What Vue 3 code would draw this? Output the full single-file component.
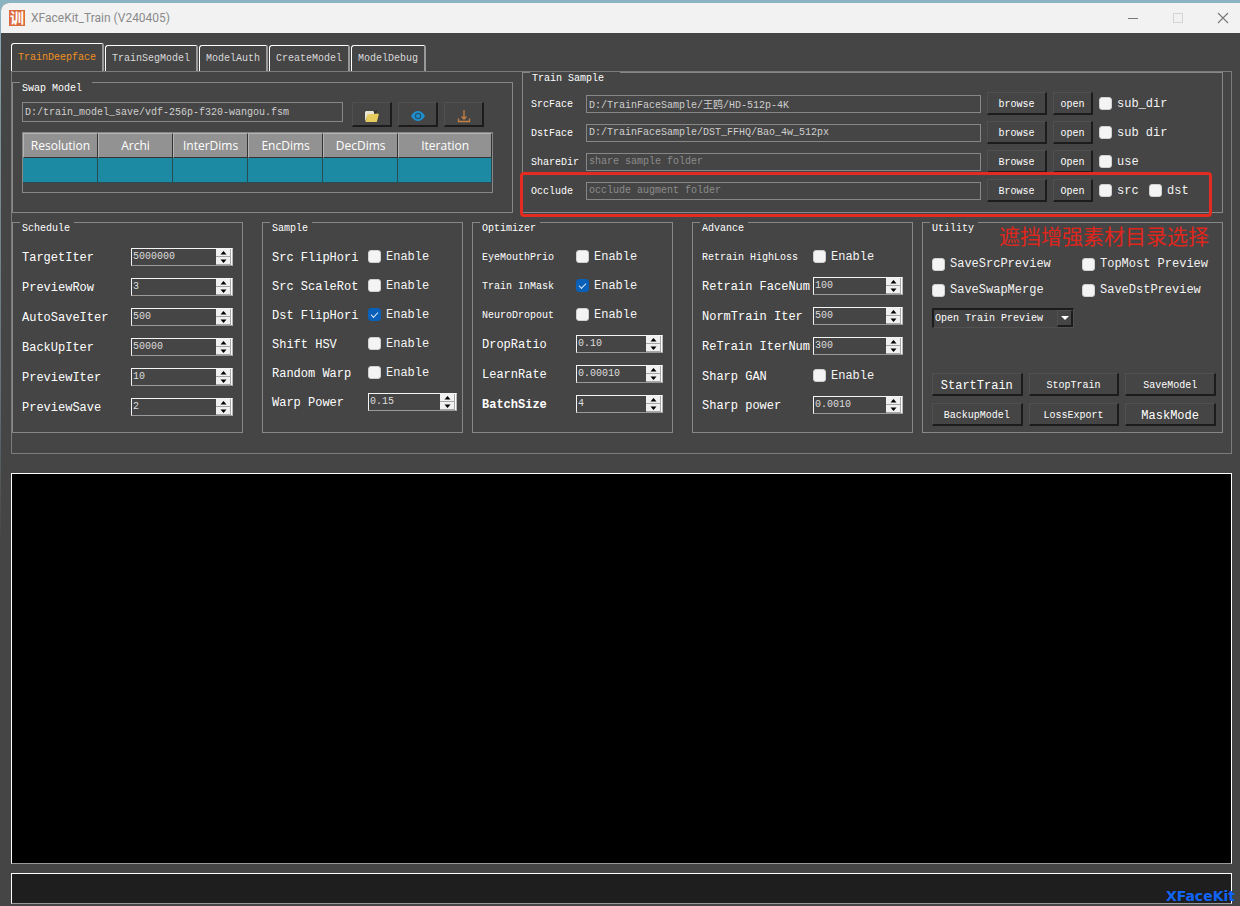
<script setup>
import { ref, reactive } from 'vue'

const tabs = ['TrainDeepface', 'TrainSegModel', 'ModelAuth', 'CreateModel', 'ModelDebug']
const activeTab = ref('TrainDeepface')
const modelPath = ref('D:/train_model_save/vdf-256p-f320-wangou.fsm')
const columns = ['Resolution', 'Archi', 'InterDims', 'EncDims', 'DecDims', 'Iteration']

const folders = reactive([
  { id: 'src', label: 'SrcFace', value: 'D:/TrainFaceSample/王鸥/HD-512p-4K', hint: '', browse: 'browse', open: 'open', checks: ['sub_dir'] },
  { id: 'dst', label: 'DstFace', value: 'D:/TrainFaceSample/DST_FFHQ/Bao_4w_512px', hint: '', browse: 'browse', open: 'open', checks: ['sub dir'] },
  { id: 'share', label: 'ShareDir', value: '', hint: 'share sample folder', browse: 'Browse', open: 'Open', checks: ['use'] },
  { id: 'occlude', label: 'Occlude', value: '', hint: 'occlude augment folder', browse: 'Browse', open: 'Open', checks: ['src', 'dst'], note: '遮挡增强素材目录选择' },
])

const groups = reactive([
  {
    name: 'Schedule',
    rows: [
      { label: 'TargetIter', value: '5000000' },
      { label: 'PreviewRow', value: '3' },
      { label: 'AutoSaveIter', value: '500' },
      { label: 'BackUpIter', value: '50000' },
      { label: 'PreviewIter', value: '10' },
      { label: 'PreviewSave', value: '2' },
    ],
  },
  {
    name: 'Sample',
    rows: [
      { label: 'Src FlipHori', check: true, on: false },
      { label: 'Src ScaleRot', check: true, on: false },
      { label: 'Dst FlipHori', check: true, on: true },
      { label: 'Shift HSV', check: true, on: false },
      { label: 'Random Warp', check: true, on: false },
      { label: 'Warp Power', value: '0.15' },
    ],
  },
  {
    name: 'Optimizer',
    rows: [
      { label: 'EyeMouthPrio', check: true, on: false, small: true },
      { label: 'Train InMask', check: true, on: true, small: true },
      { label: 'NeuroDropout', check: true, on: false, small: true },
      { label: 'DropRatio', value: '0.10' },
      { label: 'LearnRate', value: '0.00010' },
      { label: 'BatchSize', value: '4', strong: true },
    ],
  },
  {
    name: 'Advance',
    rows: [
      { label: 'Retrain HighLoss', check: true, on: false, small: true },
      { label: 'Retrain FaceNum', value: '100' },
      { label: 'NormTrain Iter', value: '500' },
      { label: 'ReTrain IterNum', value: '300' },
      { label: 'Sharp GAN', check: true, on: false },
      { label: 'Sharp power', value: '0.0010' },
    ],
  },
])

const utilityChecks = ['SaveSrcPreview', 'TopMost Preview', 'SaveSwapMerge', 'SaveDstPreview']
const actions = [
  { name: 'StartTrain', large: true },
  { name: 'StopTrain' },
  { name: 'SaveModel' },
  { name: 'BackupModel' },
  { name: 'LossExport' },
  { name: 'MaskMode', large: true },
]

function step(row, dir) {
  const digits = (row.value.split('.')[1] || '').length
  row.value = Math.max(0, Number(row.value) + dir * 10 ** -digits).toFixed(digits)
}
</script>

<template>
  <div class="desktop">
    <div class="window">
      <header class="titlebar">
        <span class="logo">训</span>
        <h1>XFaceKit_Train (V240405)</h1>
        <div class="window-buttons">
          <button type="button" aria-label="Minimize">
            <svg width="12" height="12" viewBox="0 0 12 12"><path d="M1 6.5h10" stroke="#777" /></svg>
          </button>
          <button type="button" aria-label="Maximize" disabled>
            <svg width="12" height="12" viewBox="0 0 12 12"><rect x="1.5" y="1.5" width="9" height="9" fill="none" stroke="#d4d4d4" /></svg>
          </button>
          <button type="button" aria-label="Close">
            <svg width="12" height="12" viewBox="0 0 12 12"><path d="M1 1l10 10M11 1L1 11" stroke="#777" stroke-width="1.1" /></svg>
          </button>
        </div>
      </header>

      <main class="content">
        <nav class="tabs" role="tablist">
          <button
            v-for="tab in tabs"
            :key="tab"
            type="button"
            role="tab"
            :aria-selected="tab === activeTab"
            :class="{ active: tab === activeTab }"
            @click="activeTab = tab"
          >{{ tab }}</button>
        </nav>

        <div class="panel">
          <div class="top-row">
            <section class="group swap">
              <h2>Swap Model</h2>
              <div class="model-row">
                <input v-model="modelPath" class="field" type="text" aria-label="Model path" />
                <button type="button" class="btn" aria-label="Open model">
                  <svg width="16" height="14" viewBox="0 0 16 14">
                    <path d="M1 12.500V3l1-1h7l1 1h3v3H4z" fill="#e9e4d4" />
                    <path d="M10 2l3-1v4h-3z" fill="#333" />
                    <path d="M3.500 5.500L14 4.500l.8 1-2 7.500H1.500z" fill="#e8cd5e" />
                  </svg>
                </button>
                <button type="button" class="btn" aria-label="Preview model">
                  <svg width="16" height="14" viewBox="0 0 16 14">
                    <path d="M1 7Q4 2 8 2t7 5q-3 5-7 5T1 7z" fill="#1e90d2" />
                    <circle cx="8" cy="7" r="2.600" fill="#1e90d2" stroke="#24536f" stroke-width="1.300" />
                  </svg>
                </button>
                <button type="button" class="btn" aria-label="Export model">
                  <svg width="14" height="14" viewBox="0 0 14 14" fill="none" stroke="#c68045" stroke-width="1.300">
                    <path d="M1.500 9.500v3h11v-3M7 1v8.500M4.500 7.500L7 10l2.500-2.500" />
                  </svg>
                </button>
              </div>
              <div class="table-frame">
                <table>
                  <thead>
                    <tr><th v-for="c in columns" :key="c" scope="col">{{ c }}</th></tr>
                  </thead>
                  <tbody>
                    <tr><td v-for="c in columns" :key="c"></td></tr>
                  </tbody>
                </table>
              </div>
            </section>

            <section class="group train">
              <h2>Train Sample</h2>
              <div v-for="f in folders" :key="f.id" class="folder-row">
                <label :for="'dir-' + f.id">{{ f.label }}</label>
                <input :id="'dir-' + f.id" v-model="f.value" class="field" type="text" :placeholder="f.hint" />
                <button type="button" class="btn browse">{{ f.browse }}</button>
                <button type="button" class="btn open">{{ f.open }}</button>
                <div class="folder-checks">
                  <label v-for="c in f.checks" :key="c" class="check">
                    <input type="checkbox" />{{ c }}
                  </label>
                </div>
                <div v-if="f.note" class="callout"><span>{{ f.note }}</span></div>
              </div>
            </section>
          </div>

          <div class="group-row">
            <section v-for="g in groups" :key="g.name" class="group options" :class="g.name.toLowerCase()">
              <h2>{{ g.name }}</h2>
              <div v-for="r in g.rows" :key="r.label" class="option" :class="{ tick: r.check }">
                <label class="name" :class="{ small: r.small, strong: r.strong }" :for="g.name + r.label">{{ r.label }}</label>
                <label v-if="r.check" class="check">
                  <input :id="g.name + r.label" v-model="r.on" type="checkbox" />Enable
                </label>
                <div v-else class="spinner">
                  <input :id="g.name + r.label" v-model="r.value" type="text" inputmode="decimal" />
                  <div class="steps">
                    <button type="button" aria-label="Increase" @click="step(r, 1)">
                      <svg width="7" height="4" viewBox="0 0 7 4"><path d="M3.500 0L6.500 3.500h-6z" /></svg>
                    </button>
                    <button type="button" aria-label="Decrease" @click="step(r, -1)">
                      <svg width="7" height="4" viewBox="0 0 7 4"><path d="M3.500 4L6.500 .5h-6z" /></svg>
                    </button>
                  </div>
                </div>
              </div>
            </section>

            <section class="group utility">
              <h2>Utility</h2>
              <div class="utility-checks">
                <label v-for="c in utilityChecks" :key="c" class="check">
                  <input type="checkbox" />{{ c }}
                </label>
              </div>
              <div class="combo">
                <select aria-label="Preview mode">
                  <option>Open Train Preview</option>
                </select>
                <span class="combo-arrow">
                  <svg width="8" height="4" viewBox="0 0 8 4"><path d="M0 0h8L4 4z" fill="#fff" /></svg>
                </span>
              </div>
              <div class="actions">
                <button v-for="a in actions" :key="a.name" type="button" class="btn" :class="{ large: a.large }">{{ a.name }}</button>
              </div>
            </section>
          </div>
        </div>

        <div class="output"></div>
        <footer class="status"><strong>XFaceKit</strong></footer>
      </main>
    </div>
  </div>
</template>

<style>
body {
  margin: 0;
  background: #454545;
}
</style>

<style scoped>
* {
  box-sizing: border-box;
}

.desktop {
  --bg: #454545;
  --line: #878787;
  display: flex;
  min-height: 100vh;
  padding: 3px 0 0 1px;
  background: linear-gradient(#8bb4c2 0, #7f949c 12%, #66747c 42%, #454545 60%);
  font-family: "Liberation Mono", "Noto Sans CJK SC", monospace;
  font-size: 10px;
  line-height: 14px;
  color: #fff;
}

.window {
  flex: 1;
  display: flex;
  flex-direction: column;
  min-width: 0;
  border-radius: 8px 0 0 0;
  background: var(--bg);
  overflow: hidden;
}

button,
input,
select {
  margin: 0;
  font: inherit;
  color: inherit;
  border-radius: 0;
}

.titlebar {
  display: flex;
  align-items: center;
  height: 30px;
  padding-left: 8px;
  background: #f2f2f2;
}

.logo {
  width: 16px;
  height: 16px;
  background: #dc6a3c;
  font: bold 14px/14px "Noto Sans CJK SC", sans-serif;
  text-align: center;
}

h1 {
  margin: 0 0 0 6px;
  font: 12px/16px Roboto, "Noto Sans", sans-serif;
  color: #8a8a8a;
}

.window-buttons {
  display: flex;
  margin-left: auto;
}

.window-buttons button {
  display: grid;
  place-items: center;
  width: 45px;
  height: 30px;
  padding: 0;
  border: 0;
  background: none;
}

.window-buttons button:last-child {
  width: 40px;
  padding-left: 5px;
}

.content {
  flex: 1;
  display: flex;
  flex-direction: column;
  padding: 10px 8px 2px 10px;
}

.tabs {
  display: flex;
  align-items: flex-end;
  gap: 1px;
}

.tabs button {
  height: 26px;
  padding: 0 6px;
  border: solid;
  border-color: #fff #999 transparent #fff;
  border-width: 1px 2px 0 1px;
  border-radius: 3px 2px 0 0;
  background: var(--bg);
  color: #d8d8d8;
}

.tabs button.active {
  height: 28px;
  color: #f0911e;
}

.panel {
  padding: 0 8px 20px 0;
  border: 1px solid #7c7c7c;
}

.top-row {
  display: grid;
  grid-template-columns: 501fr 701fr;
  gap: 9px;
}

.group-row {
  display: grid;
  grid-template-columns: 241fr 201fr 211fr 221fr 301fr;
  gap: 9px;
  margin-top: 9px;
}

.group {
  display: flex;
  flex-direction: column;
  min-width: 0;
  padding: 0 9px 10px;
  border: 1px solid var(--line);
}

h2 {
  align-self: flex-start;
  margin: -1px 0 6px -2px;
  padding: 0 4px 0 2px;
  background: var(--bg);
  font-size: 10px;
  font-weight: normal;
  line-height: 14px;
}

.field {
  min-width: 0;
  padding: 0 2px;
  border: 1px solid var(--line);
  background: transparent;
  color: #cfcfcf;
}

.field::placeholder {
  color: #8c8c8c;
  opacity: 1;
}

.btn {
  display: grid;
  place-items: center;
  height: 23px;
  padding: 3px 0 0;
  border: solid;
  border-width: 1px 2px 2px 1px;
  border-color: #505050 #1c1c1c #1c1c1c #505050;
  background: var(--bg);
}

.swap {
  margin-top: 10px;
  padding-right: 19px;
}

.swap h2 {
  padding-right: 10px;
}

.model-row {
  display: flex;
  align-items: flex-start;
  gap: 6px;
  margin: 0 9px 5px 0;
}

.model-row .field {
  flex: 1;
  height: 20px;
  margin-right: 3px;
}

.model-row .btn {
  width: 40px;
  height: 25px;
}

.table-frame {
  height: 61px;
  border: 1px solid var(--line);
}

table {
  width: 100%;
  border-collapse: separate;
  border-spacing: 0;
  table-layout: fixed;
  font: 12px/22px "Open Sans", "Noto Sans", sans-serif;
}

th {
  height: 25px;
  padding: 0;
  border: 1px solid;
  border-color: #b4b4b4 #333 #333 #b4b4b4;
  background: #929292;
  font-weight: normal;
}

th:last-child {
  width: 20%;
}

td {
  height: 25px;
  padding: 0;
  border: solid #2b4b52;
  border-width: 0 1px 1px 0;
  background: #1b8aa2;
}

.train {
  padding: 0 10px 10px 8px;
}

.train h2 {
  margin-left: -1px;
  padding-right: 16px;
}

.folder-row {
  position: relative;
  display: flex;
  align-items: center;
  gap: 6px;
}

.folder-row + .folder-row {
  margin-top: 6px;
}

.folder-row > label {
  width: 49px;
  padding-top: 2px;
}

.folder-row .field {
  flex: 1;
  height: 18px;
}

.browse {
  width: 60px;
}

.open {
  width: 40px;
}

.folder-checks {
  display: flex;
  width: 113px;
}

.folder-checks .check {
  width: 50px;
}

.folder-checks .check:only-child {
  width: auto;
}

.check {
  display: flex;
  align-items: center;
  gap: 5px;
  font-size: 12px;
  color: #f4f4f4;
  white-space: nowrap;
}

.check input {
  flex: none;
  appearance: none;
  display: grid;
  place-items: center;
  width: 13px;
  height: 13px;
  border: 1px solid #d0d0d0;
  border-radius: 3px;
  background: #f4f4f4;
}

.check input:checked {
  border-color: #0a5fb8;
  background: #0a5fb8;
}

.check input:checked::before {
  content: "";
  width: 6px;
  height: 3px;
  margin-bottom: 2px;
  border: solid #d6e6f6;
  border-width: 0 0 1px 1px;
  transform: rotate(-45deg);
}

.callout {
  position: absolute;
  inset: -7px 0 -15px -11px;
  border: 3px solid #e32b22;
  border-radius: 4px;
  pointer-events: none;
}

.callout span {
  position: absolute;
  top: 100%;
  right: 0;
  margin-top: 6px;
  font: 21px/30px "Noto Sans CJK SC", sans-serif;
  color: #e0261c;
  white-space: nowrap;
}

.schedule,
.optimizer {
  margin-right: 10px;
}

.sample {
  padding-right: 5px;
}

.option {
  display: flex;
  align-items: center;
  height: 30px;
}

.option.tick {
  height: 29px;
}

.name {
  flex: none;
  padding-top: 2px;
  font-size: 12px;
  white-space: nowrap;
}

.name.small {
  font-size: 10px;
}

.name.strong {
  font-weight: bold;
}

.schedule .name {
  width: 109px;
}

.sample .name {
  width: 96px;
}

.optimizer .name {
  width: 94px;
}

.advance .name {
  width: 111px;
}

.spinner {
  flex: 1;
  display: flex;
  min-width: 0;
  height: 18px;
  border: solid;
  border-width: 1px;
  border-color: #f4f4f4 #b8b8b8 #9a9a9a #f4f4f4;
}

.spinner input {
  flex: 1;
  width: 0;
  min-width: 0;
  padding: 0 1px;
  border: 0;
  background: transparent;
  color: #dcdcdc;
}

.steps {
  display: flex;
  flex-direction: column;
  width: 16px;
  padding-right: 1px;
  background: #fff;
}

.steps button {
  flex: 1;
  display: grid;
  place-items: center;
  min-height: 0;
  padding: 0;
  border: solid #a6a6a6;
  border-width: 0 1px 1px 0;
  background: #f0f0f0;
  line-height: 0;
}

.utility {
  padding: 0 6px 6px 9px;
}

.utility-checks {
  display: grid;
  grid-template-columns: 150px 1fr;
  grid-auto-rows: 26px;
  margin-top: 9px;
}

.combo {
  position: relative;
  width: 142px;
  margin-top: 5px;
}

.combo select {
  display: block;
  appearance: none;
  width: 100%;
  height: 20px;
  padding: 0 18px 0 1px;
  border: solid;
  border-width: 2px 1px 1px 2px;
  border-color: #1c1c1c #505050 #505050 #1c1c1c;
  background: var(--bg);
}

.combo-arrow {
  position: absolute;
  top: 2px;
  right: 1px;
  display: grid;
  place-items: center;
  width: 16px;
  height: 17px;
  border: solid;
  border-width: 1px 2px 2px 1px;
  border-color: #505050 #1c1c1c #1c1c1c #505050;
  pointer-events: none;
}

.actions {
  display: grid;
  grid-template-columns: repeat(3, 1fr);
  gap: 7px 6px;
  margin-top: auto;
}

.btn.large {
  font-size: 12px;
}

.output {
  flex: 1;
  min-height: 200px;
  margin-top: 19px;
  border: 1px solid;
  border-color: #fff #fff #999 #fff;
  background: #000;
}

.status {
  position: relative;
  height: 31px;
  margin-top: 9px;
  border: 1px solid;
  border-color: #fff #fff #999 #fff;
  background: #1e1e1e;
}

.status strong {
  position: absolute;
  right: -4px;
  bottom: -1px;
  font: bold 14px/16px "DejaVu Sans", sans-serif;
  color: #1264f5;
}
</style>
